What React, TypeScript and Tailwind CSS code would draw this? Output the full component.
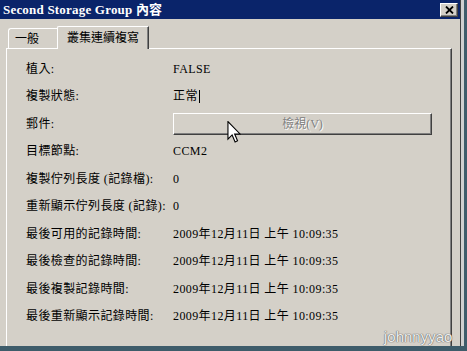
const rows: { label: string; value?: string; button?: boolean; caret?: boolean }[] = [
  { label: "植入:", value: "FALSE" },
  { label: "複製狀態:", value: "正常", caret: true },
  { label: "郵件:", button: true },
  { label: "目標節點:", value: "CCM2" },
  { label: "複製佇列長度 (記錄檔):", value: "0" },
  { label: "重新顯示佇列長度 (記錄):", value: "0" },
  { label: "最後可用的記錄時間:", value: "2009年12月11日 上午 10:09:35" },
  { label: "最後檢查的記錄時間:", value: "2009年12月11日 上午 10:09:35" },
  { label: "最後複製記錄時間:", value: "2009年12月11日 上午 10:09:35" },
  { label: "最後重新顯示記錄時間:", value: "2009年12月11日 上午 10:09:35" },
];

function CloseButton() {
  return (
    <div className="flex h-[14px] w-[18px] items-center justify-center border border-t-white border-l-white border-r-[#404040] border-b-[#404040] bg-[#d4d0c8] shadow-[inset_-1px_-1px_#808080]">
      <svg width="9" height="8" viewBox="0 0 9 8">
        <path d="M1 0.5 L8 7.5 M8 0.5 L1 7.5" stroke="#000" strokeWidth="1.8" />
      </svg>
    </div>
  );
}

function Cursor() {
  return (
    <svg
      className="absolute left-[227px] top-[121px]"
      width="14"
      height="22"
      viewBox="0 0 12 20"
    >
      <path
        d="M0.5 0.5 L0.5 16.5 L4.3 12.7 L7 19 L9.2 18 L6.6 11.8 L11.5 11.8 Z"
        fill="#fff"
        stroke="#000"
        strokeWidth="1"
        strokeLinejoin="miter"
      />
    </svg>
  );
}

export default function App() {
  return (
    <div
      className="relative flex h-[351px] w-[467px] flex-col overflow-hidden bg-[#3e5c6a] text-[12px] text-black"
      style={{ fontFamily: '"Liberation Serif", "Noto Sans CJK TC", serif' }}
    >
      <div className="flex h-[346px]">
        <div className="relative flex w-[461px] flex-col border-r border-[#404040] bg-[#d4d0c8]">
          <div className="flex h-[19px] items-center justify-between bg-[#0a246a] pl-[3px] pr-[2px]">
            <span className="text-[13px] font-bold leading-none tracking-[0.2px] text-white">
              Second Storage Group 內容
            </span>
            <CloseButton />
          </div>

          <div className="flex flex-1 flex-col pl-[6px] pr-[8px] pt-[7px]">
            <div className="flex h-[22px] items-end">
              <div className="ml-[2px] flex h-[20px] w-[49px] items-center rounded-tl-[3px] border-l border-t border-white pl-[6px] pt-px">
                一般
              </div>
              <div className="relative z-10 -mb-px flex h-[23px] w-[92px] items-center rounded-tl-[2px] border-l border-t border-r border-white border-r-[#404040] bg-[#d4d0c8] pl-[9px] shadow-[inset_-1px_0_#808080]">
                叢集連續複寫
              </div>
            </div>

            <div className="flex-1 border-l border-t border-r border-white border-r-[#404040] pl-[19px] pt-[6px] shadow-[inset_-1px_0_#808080]">
              {rows.map((row) => (
                <div key={row.label} className="flex h-[27.5px] items-center whitespace-nowrap tracking-[0.4px]">
                  <div className="w-[147px]">{row.label}</div>
                  {row.button ? (
                    <div className="flex h-[22px] w-[259px] items-center justify-center border border-t-white border-l-white border-r-[#404040] border-b-[#404040] shadow-[inset_-1px_-1px_#808080] tracking-normal text-[#808080] [text-shadow:1px_1px_0_#ffffff]">
                      檢視(V)
                    </div>
                  ) : (
                    <div className="flex items-center">
                      {row.value}
                      {row.caret ? (
                        <span className="ml-px inline-block h-[13px] w-px bg-black" />
                      ) : null}
                    </div>
                  )}
                </div>
              ))}
            </div>
          </div>

          <Cursor />
        </div>
        <div className="w-[3px] bg-[#cfcfcf]" />
      </div>

      <span
        className="absolute left-[384px] top-[326px] text-[15px] text-[#eeeeee] [text-shadow:0_0_1px_#555,0_0_1px_#555]"
        style={{ fontFamily: '"Liberation Sans", sans-serif' }}
      >
        johnnyyao
      </span>
    </div>
  );
}
